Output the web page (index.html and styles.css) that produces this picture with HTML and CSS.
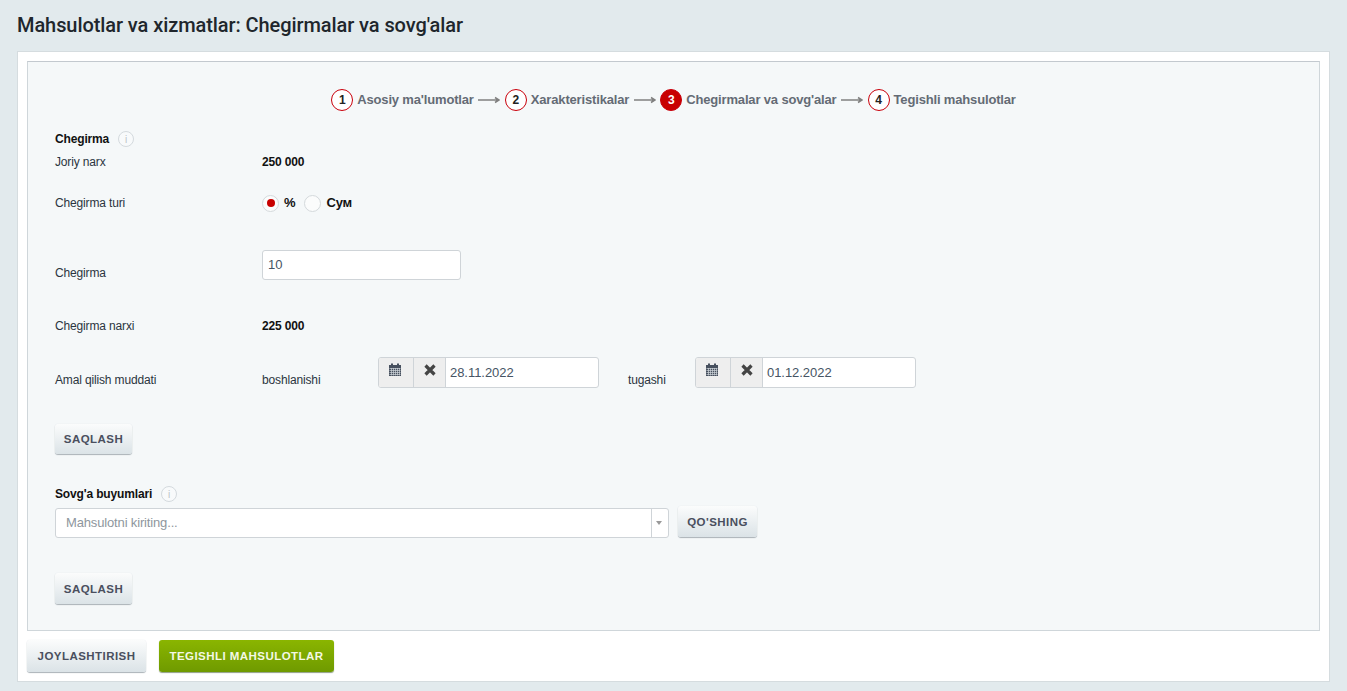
FILE: index.html
```html
<!DOCTYPE html>
<html lang="uz">
<head>
<meta charset="utf-8">
<title>Chegirmalar va sovg'alar</title>
<link rel="stylesheet" href="styles.css">
</head>
<body>
<h1 class="title">Mahsulotlar va xizmatlar: Chegirmalar va sovg'alar</h1>
<main class="card">
  <section class="panel">
    <nav class="steps">
      <span class="num">1</span><span class="step-name">Asosiy ma'lumotlar</span>
      <svg class="arrow" viewBox="0 0 22 8"><path d="M0 4H20M17 1.500L21 4L17 6.500" fill="none" stroke="#808080" stroke-width="1.500"/></svg>
      <span class="num">2</span><span class="step-name">Xarakteristikalar</span>
      <svg class="arrow" viewBox="0 0 22 8"><path d="M0 4H20M17 1.500L21 4L17 6.500" fill="none" stroke="#808080" stroke-width="1.500"/></svg>
      <span class="num active">3</span><span class="step-name">Chegirmalar va sovg'alar</span>
      <svg class="arrow" viewBox="0 0 22 8"><path d="M0 4H20M17 1.500L21 4L17 6.500" fill="none" stroke="#808080" stroke-width="1.500"/></svg>
      <span class="num">4</span><span class="step-name">Tegishli mahsulotlar</span>
    </nav>

    <h2 class="heading heading-first">Chegirma <span class="info">i</span></h2>
    <div class="row row-price"><span class="label">Joriy narx</span><b class="value">250 000</b></div>
    <div class="row row-type">
      <span class="label">Chegirma turi</span>
      <div class="radios">
        <span class="radio checked"></span><b class="radio-text">%</b>
        <span class="radio"></span><b class="radio-text">Сум</b>
      </div>
    </div>
    <div class="row row-input">
      <span class="label label-low">Chegirma</span>
      <div class="input input-discount">10</div>
    </div>
    <div class="row row-final"><span class="label">Chegirma narxi</span><b class="value">225 000</b></div>
    <div class="row row-dates">
      <span class="label label-drop">Amal qilish muddati</span>
      <span class="date-label date-label-start">boshlanishi</span>
      <div class="date">
        <span class="date-btn"><svg class="date-icon" viewBox="0 0 14 14"><path fill="#47505e" d="M1 2h2V0.500h2V2h4V0.500h2V2h2v11H1z"/><path stroke="#cfd4da" stroke-width="0.700" d="M1.500 5.500h11M1.500 7.500h11M1.500 9.500h11M1.500 11.500h11M3.500 5v7.500M5.500 5v7.500M7.500 5v7.500M9.500 5v7.500M11.500 5v7.500"/></svg></span>
        <span class="date-btn"><svg class="date-icon" viewBox="0 0 14 14"><path stroke="#444" stroke-width="3.200" d="M2.500 2.500L11.500 11.500M11.500 2.500L2.500 11.500"/></svg></span>
        <span class="date-value">28.11.2022</span>
      </div>
      <span class="date-label date-label-end">tugashi</span>
      <div class="date">
        <span class="date-btn"><svg class="date-icon" viewBox="0 0 14 14"><path fill="#47505e" d="M1 2h2V0.500h2V2h4V0.500h2V2h2v11H1z"/><path stroke="#cfd4da" stroke-width="0.700" d="M1.500 5.500h11M1.500 7.500h11M1.500 9.500h11M1.500 11.500h11M3.500 5v7.500M5.500 5v7.500M7.500 5v7.500M9.500 5v7.500M11.500 5v7.500"/></svg></span>
        <span class="date-btn"><svg class="date-icon" viewBox="0 0 14 14"><path stroke="#444" stroke-width="3.200" d="M2.500 2.500L11.500 11.500M11.500 2.500L2.500 11.500"/></svg></span>
        <span class="date-value">01.12.2022</span>
      </div>
    </div>
    <button class="btn btn-save-one">SAQLASH</button>

    <h2 class="heading heading-gift">Sovg'a buyumlari <span class="info">i</span></h2>
    <div class="gift-row">
      <div class="select"><span class="placeholder">Mahsulotni kiriting...</span><span class="caret"></span></div>
      <button class="btn btn-add">QO'SHING</button>
    </div>
    <button class="btn btn-save-two">SAQLASH</button>
  </section>
  <footer class="actions">
    <button class="btn btn-place">JOYLASHTIRISH</button>
    <button class="btn btn-green">TEGISHLI MAHSULOTLAR</button>
  </footer>
</main>
</body>
</html>
```
FILE: styles.css
```css
* { box-sizing: border-box; }
html, body { height: 100%; }
body {
  margin: 0;
  padding: 0 17px;
  background: #e2eaed;
  font-family: "Liberation Sans", Arial, sans-serif;
  font-size: 12px;
  letter-spacing: -0.15px;
  color: #2f3b47;
  overflow: hidden;
}
.title {
  margin: 0;
  height: 51px;
  padding-top: 13px;
  font-family: Roboto, sans-serif;
  font-size: 20px;
  line-height: 24px;
  font-weight: 500;
  letter-spacing: -0.08px;
  color: #20262c;
}
.card {
  width: 1313px;
  height: 631px;
  padding: 9px;
  background: #fff;
  border: 1px solid #d5dcdf;
}
.panel {
  height: 570px;
  padding: 0 27px;
  background: #f5f8f9;
  border: 1px solid #cfd6da;
  border-top-color: #c3c9cf;
}
.steps {
  display: flex;
  align-items: center;
  justify-content: center;
  gap: 4px;
  height: 22px;
  margin-top: 27px;
  font-size: 13px;
  font-weight: 700;
  letter-spacing: -0.16px;
  color: #646b75;
}
.num {
  display: flex;
  align-items: center;
  justify-content: center;
  width: 22px;
  height: 22px;
  border: 1px solid #c9000b;
  border-radius: 50%;
  background: #fff;
  color: #222;
  font-size: 12px;
}
.num.active { background: #c80000; color: #fff; }
.step-name { margin-top: -1px; white-space: nowrap; }
.arrow { width: 22px; height: 8px; margin: 0 0.5px; }
.heading {
  display: flex;
  align-items: center;
  gap: 9px;
  margin: 0;
  height: 18px;
  font-size: 12px;
  font-weight: 700;
  color: #111;
}
.heading-first { margin-top: 19px; }
.heading-gift { margin-top: 31px; }
.info {
  display: flex;
  align-items: center;
  justify-content: center;
  width: 16px;
  height: 16px;
  border: 1px solid #d4dade;
  border-radius: 50%;
  background: #f8fafb;
  color: #bcc3c8;
  font-size: 10px;
  font-weight: 400;
}
.row {
  display: flex;
  align-items: center;
  color: #2b3540;
}
.label { flex: 0 0 207px; }
.value { color: #111; }
.row-price { height: 18px; margin-top: 5px; }
.row-type { height: 20px; margin-top: 22px; }
.radios { display: flex; align-items: center; }
.radio {
  width: 17px;
  height: 17px;
  border: 1px solid #d4d9dc;
  border-radius: 50%;
  background: #fbfcfc;
  display: flex;
  align-items: center;
  justify-content: center;
}
.radio.checked::after {
  content: "";
  width: 8px;
  height: 8px;
  border-radius: 50%;
  background: #c80000;
}
.radio-text { margin: -1px 9px 0 5px; font-size: 13px; color: #111; }
.radio-text:last-child { margin-right: 0; }
.row-input { height: 30px; margin-top: 37px; align-items: flex-start; }
.label-low { margin-top: 16px; }
.input {
  height: 30px;
  padding: 0 5px;
  line-height: 27px;
  font-size: 13px;
  letter-spacing: 0;
  background: #fff;
  border: 1px solid #cfd4d8;
  border-radius: 3px;
  color: #465464;
}
.input-discount { width: 199px; }
.row-final { height: 18px; margin-top: 37px; }
.row-dates { height: 31px; margin-top: 22px; }
.label-drop, .date-label { margin-top: 14px; }
.date-label { flex: none; }
.date-label-start { width: 116px; }
.date-label-end { width: 67px; margin-left: 29px; }
.date {
  flex: none;
  display: flex;
  width: 221px;
  height: 31px;
  border: 1px solid #cfd4d8;
  border-radius: 3px;
  background: #fff;
  overflow: hidden;
}
.date-btn {
  flex: 0 0 35px;
  display: flex;
  align-items: flex-start;
  justify-content: center;
  padding: 5px 2px 0 0;
  background: #eeeeee;
  border-right: 1px solid #cfd4d8;
}
.date-btn + .date-btn { flex-basis: 32px; padding: 5px 0 0 1px; }
.date-icon { width: 14px; height: 14px; }
.date-value { padding-left: 4px; line-height: 30px; font-size: 13px; letter-spacing: -0.05px; color: #465464; }
.btn {
  display: block;
  height: 31px;
  padding: 0 4px;
  border: 0;
  border-radius: 3px;
  background: linear-gradient(#fbfcfc, #dbe3e7);
  box-shadow: 0 1px 1px #aab2b7, 0 0 1px #d8dee1;
  font-family: "Liberation Sans", Arial, sans-serif;
  font-size: 11.5px;
  font-weight: 700;
  letter-spacing: 0.45px;
  color: #4a4f5e;
  white-space: nowrap;
}
.btn-save-one { width: 77px; height: 30px; margin-top: 36px; }
.gift-row { display: flex; align-items: flex-start; gap: 9px; margin-top: 3px; }
.select {
  display: flex;
  justify-content: space-between;
  width: 614px;
  height: 30px;
  margin-top: 2px;
  background: #fff;
  border: 1px solid #cfd4d8;
  border-radius: 3px;
}
.placeholder { padding-left: 10px; line-height: 27px; font-size: 13px; letter-spacing: -0.15px; color: #8e969d; }
.caret {
  position: relative;
  flex: 0 0 17px;
  border-left: 1px solid #cfd4d8;
}
.caret::after {
  content: "";
  position: absolute;
  left: 4px;
  top: 12px;
  border: 3.500px solid transparent;
  border-top: 4px solid #999;
  border-bottom: 0;
}
.btn-add { width: 79px; }
.btn-save-two { width: 77px; margin-top: 35px; }
.actions { display: flex; gap: 13px; margin-top: 9px; }
.btn-place { width: 119px; height: 32px; }
.btn-green {
  width: 175px;
  height: 32px;
  background: linear-gradient(#8ab500, #6f9a00);
  box-shadow: 0 1px 1px #8f9e86;
  color: #f4f8e4;
}
```
